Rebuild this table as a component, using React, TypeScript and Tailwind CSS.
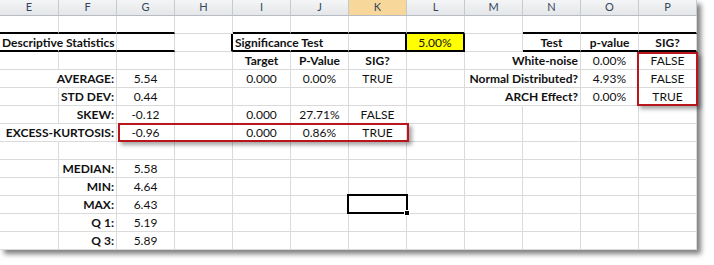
import React from "react";

type Border = "thin" | "thick" | "none";
type Align = "left" | "center" | "right";

type CellProps = {
  children?: React.ReactNode;
  b?: Border;
  r?: Border;
  align?: Align;
  bold?: boolean;
  className?: string;
};

const Cell = ({ children, b = "thin", r = "thin", align = "center", bold, className = "" }: CellProps) => {
  const bCls = b === "thick" ? "border-b-2 border-b-black" : "border-b border-b-[#dadada]";
  const rCls =
    r === "thick"
      ? "border-r-2 border-r-black"
      : r === "none"
      ? "border-r border-r-transparent"
      : "border-r border-r-[#dadada]";
  const aCls =
    align === "right" ? "justify-end pr-[2px]" : align === "left" ? "justify-start pl-[2px]" : "justify-center";
  return (
    <div
      className={`h-[18px] flex items-center pt-[1px] whitespace-nowrap text-[12px] text-[#111] ${bCls} ${rCls} ${aCls} ${
        bold ? "font-bold" : ""
      } ${className}`}
    >
      {children}
    </div>
  );
};

const cols = ["E", "F", "G", "H", "I", "J", "K", "L", "M", "N", "O", "P"];

// descriptive stats that sit below the blank row
const lower = [
  ["MEDIAN:", "5.58"],
  ["MIN:", "4.64"],
  ["MAX:", "6.43"],
  ["Q 1:", "5.19"],
  ["Q 3:", "5.89"],
];

const Blank = ({ n }: { n: number }) => (
  <>
    {Array.from({ length: n }).map((_, i) => (
      <Cell key={i} />
    ))}
  </>
);

export default function App() {
  return (
    <div className="w-[714px] h-[265px] bg-white font-['Lato',sans-serif]">
      <div className="relative w-[697px] h-[250px] bg-white shadow-[4px_4px_5px_rgba(0,0,0,0.5)]">
        <div className="grid grid-cols-[59px_repeat(11,58px)]">
          {/* column headers */}
          {cols.map((c) => (
            <div
              key={c}
              className={`h-[16px] flex items-center justify-center text-[11px] text-[#34475c] border-r border-r-[#c6c9cd] border-b border-b-[#b7bcc2] ${
                c === "K" ? "bg-[#f8d79a]" : "bg-gradient-to-b from-[#f4f5f6] to-[#e4e6e9]"
              }`}
            >
              {c}
            </div>
          ))}

          {/* row 1 */}
          <Cell b="thick" />
          <Cell b="thick" />
          <Cell b="thick" />
          <Cell />
          <Cell b="thick" />
          <Cell b="thick" />
          <Cell b="thick" />
          <Cell b="thick" />
          <Cell />
          <Cell b="thick" />
          <Cell b="thick" />
          <Cell b="thick" />

          {/* row 2 */}
          <Cell b="thick" r="none" align="left" bold>
            Descriptive Statistics
          </Cell>
          <Cell b="thick" />
          <Cell b="thick" />
          <Cell r="thick" />
          <Cell b="thick" r="none" align="left" bold>
            Significance Test
          </Cell>
          <Cell b="thick" />
          <Cell b="thick" r="thick" />
          <Cell b="thick" r="thick" className="bg-[#ffff00]">
            5.00%
          </Cell>
          <Cell />
          <Cell b="thick" bold>
            Test
          </Cell>
          <Cell b="thick" bold>
            p-value
          </Cell>
          <Cell b="thick" bold>
            SIG?
          </Cell>

          {/* row 3 */}
          <Blank n={4} />
          <Cell bold>Target</Cell>
          <Cell bold>P-Value</Cell>
          <Cell bold>SIG?</Cell>
          <Cell />
          <Cell r="none" />
          <Cell align="right" bold>
            White-noise
          </Cell>
          <Cell>0.00%</Cell>
          <Cell>FALSE</Cell>

          {/* row 4 */}
          <Cell r="none" />
          <Cell align="right" bold>
            AVERAGE:
          </Cell>
          <Cell>5.54</Cell>
          <Cell />
          <Cell>0.000</Cell>
          <Cell>0.00%</Cell>
          <Cell>TRUE</Cell>
          <Cell />
          <Cell r="none" />
          <Cell align="right" bold>
            Normal Distributed?
          </Cell>
          <Cell>4.93%</Cell>
          <Cell>FALSE</Cell>

          {/* row 5 */}
          <Cell />
          <Cell align="right" bold>
            STD DEV:
          </Cell>
          <Cell>0.44</Cell>
          <Blank n={5} />
          <Cell r="none" />
          <Cell align="right" bold>
            ARCH Effect?
          </Cell>
          <Cell>0.00%</Cell>
          <Cell>TRUE</Cell>

          {/* row 6 */}
          <Cell />
          <Cell align="right" bold>
            SKEW:
          </Cell>
          <Cell>-0.12</Cell>
          <Cell />
          <Cell>0.000</Cell>
          <Cell>27.71%</Cell>
          <Cell>FALSE</Cell>
          <Blank n={5} />

          {/* row 7 */}
          <Cell r="none" />
          <Cell align="right" bold>
            EXCESS-KURTOSIS:
          </Cell>
          <Cell>-0.96</Cell>
          <Cell />
          <Cell>0.000</Cell>
          <Cell>0.86%</Cell>
          <Cell>TRUE</Cell>
          <Blank n={5} />

          {/* row 8 */}
          <Blank n={12} />

          {lower.map(([label, val]) => (
            <React.Fragment key={label}>
              <Cell />
              <Cell align="right" bold>
                {label}
              </Cell>
              <Cell>{val}</Cell>
              <Blank n={9} />
            </React.Fragment>
          ))}
        </div>

        {/* callout boxes */}
        <div className="absolute left-[118px] top-[123px] w-[291px] h-[19px] border-2 border-[#b8161c] shadow-[3px_3px_4px_rgba(0,0,0,0.35)]" />
        <div className="absolute left-[637px] top-[52px] w-[61px] h-[54px] border-2 border-[#b8161c] shadow-[3px_3px_4px_rgba(0,0,0,0.35)]" />

        {/* active cell */}
        <div className="absolute left-[347px] top-[194px] w-[61px] h-[20px] border-2 border-black">
          <div className="absolute -right-[4px] -bottom-[4px] w-[6px] h-[6px] bg-black border border-white" />
        </div>
      </div>
    </div>
  );
}
